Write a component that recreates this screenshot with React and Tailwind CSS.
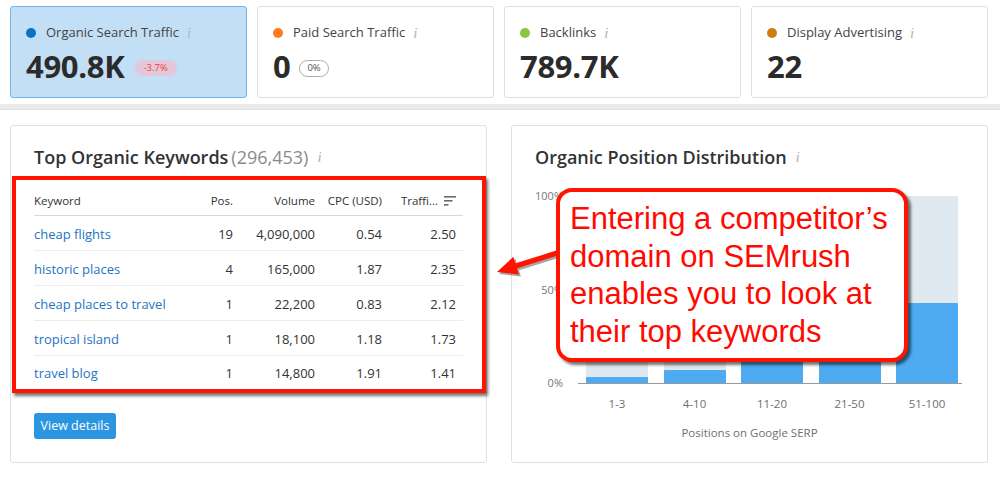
import React from "react";

const cards = [
  { label: "Organic Search Traffic", value: "490.8K", dot: "bg-[#0b72c8]", active: true, badge: "neg" },
  { label: "Paid Search Traffic", value: "0", dot: "bg-[#ff7b1c]", badge: "zero" },
  { label: "Backlinks", value: "789.7K", dot: "bg-[#8cc63f]" },
  { label: "Display Advertising", value: "22", dot: "bg-[#d17a10]" },
];

const keywords = [
  { kw: "cheap flights", pos: "19", vol: "4,090,000", cpc: "0.54", tr: "2.50" },
  { kw: "historic places", pos: "4", vol: "165,000", cpc: "1.87", tr: "2.35" },
  { kw: "cheap places to travel", pos: "1", vol: "22,200", cpc: "0.83", tr: "2.12" },
  { kw: "tropical island", pos: "1", vol: "18,100", cpc: "1.18", tr: "1.73" },
  { kw: "travel blog", pos: "1", vol: "14,800", cpc: "1.91", tr: "1.41" },
];

const bars = [
  { label: "1-3", h: 6 },
  { label: "4-10", h: 13 },
  { label: "11-20", h: 60 },
  { label: "21-50", h: 70 },
  { label: "51-100", h: 80 },
];

const Info = ({ className = "" }) => (
  <span className={`font-['Liberation_Serif',serif] italic text-[15px] text-[#b4b4b4] leading-none ${className}`}>
    i
  </span>
);

const SortIcon = () => (
  <svg width="12" height="10" viewBox="0 0 12 10" className="ml-[6px]">
    <rect x="0" y="0" width="12" height="1.6" fill="#6b6b6b" />
    <rect x="0" y="4" width="8.5" height="1.6" fill="#6b6b6b" />
    <rect x="0" y="8" width="4.5" height="1.6" fill="#6b6b6b" />
  </svg>
);

export default function App() {
  return (
    <div className="relative w-[1000px] h-[478px] overflow-hidden bg-white font-['Open_Sans',sans-serif] text-[#333]">
      {/* Summary cards */}
      <div className="flex gap-[10px] px-[10px] pt-[6px]">
        {cards.map((c) => (
          <div
            key={c.label}
            className={`w-[237px] h-[92px] rounded-[3px] border px-[15px] pt-[19px] ${
              c.active ? "bg-[#c3dff5] border-[#74b4ea]" : "bg-white border-[#dedede]"
            }`}
          >
            <div className="flex items-center h-[14px]">
              <span className={`w-[10px] h-[10px] rounded-full ${c.dot}`} />
              <span className="ml-[10px] text-[13px] text-[#444]">{c.label}</span>
              <Info className="ml-[8px]" />
            </div>
            <div className="flex items-center mt-[8px] h-[36px]">
              <span className="text-[31px] font-bold text-[#2b2b2b] leading-none tracking-[-0.3px]">{c.value}</span>
              {c.badge === "neg" && (
                <span className="ml-[10px] mt-[4px] px-[9px] h-[16px] flex items-center rounded-full bg-[#e4c7d8] text-[9.5px] text-[#ec3f3f]">
                  -3.7%
                </span>
              )}
              {c.badge === "zero" && (
                <span className="ml-[9px] mt-[4px] px-[7px] h-[17px] flex items-center rounded-full border border-[#aaa] bg-white text-[9.5px] text-[#555]">
                  0%
                </span>
              )}
            </div>
          </div>
        ))}
      </div>

      {/* gray separator band */}
      <div className="mt-[6px] h-[6px] bg-[#ebebeb] border-b border-dotted border-[#dcdcdc]" />

      {/* Panels */}
      <div className="flex gap-[24px] px-[10px] mt-[15px]">
        {/* Top Organic Keywords */}
        <div className="w-[477px] h-[338px] rounded-[3px] border border-[#e0e0e0]">
          <div className="flex items-center h-[22px] mt-[20px] pl-[23px]">
            <span className="text-[18px] font-semibold text-[#333]">Top Organic Keywords</span>
            <span className="ml-[3px] text-[18px] text-[#8b8b8b]">(296,453)</span>
            <Info className="ml-[9px]" />
          </div>

          <div className="ml-[1px] mt-[8px] border-[4px] border-[#ff1400] shadow-[2px_3px_3px_rgba(0,0,0,0.55)] pt-[6px] pl-[18px] pr-[19px]">
            <div className="grid grid-cols-[156px_43px_82px_67px_81px] h-[30px] items-center border-b border-[#d8d8d8] text-[11.5px] text-[#333]">
              <span>Keyword</span>
              <span className="text-right">Pos.</span>
              <span className="text-right">Volume</span>
              <span className="text-right">CPC (USD)</span>
              <span className="flex items-center justify-end pr-[7px]">
                Traffi...
                <SortIcon />
              </span>
            </div>
            {keywords.map((k, i) => (
              <div
                key={k.kw}
                className={`grid grid-cols-[156px_43px_82px_67px_81px] items-center text-[13px] pt-[3px] ${
                  i < keywords.length - 1 ? "h-[35px] border-b border-[#ececec]" : "h-[33px]"
                }`}
              >
                <span className="text-[#1f74c1] whitespace-nowrap">{k.kw}</span>
                <span className="text-right">{k.pos}</span>
                <span className="text-right">{k.vol}</span>
                <span className="text-right">{k.cpc}</span>
                <span className="text-right pr-[7px]">{k.tr}</span>
              </div>
            ))}
          </div>

          <button className="ml-[23px] mt-[20px] w-[82px] h-[26px] rounded-[3px] bg-[#2b96df] text-white text-[12.5px]">
            View details
          </button>
        </div>

        {/* Organic Position Distribution */}
        <div className="w-[477px] h-[338px] rounded-[3px] border border-[#e0e0e0]">
          <div className="flex items-center h-[22px] mt-[20px] pl-[23px]">
            <span className="text-[18px] font-semibold text-[#333]">Organic Position Distribution</span>
            <Info className="ml-[9px]" />
          </div>

          <div className="flex mt-[22px] pl-[23px]">
            <div className="w-[28px] h-[199px] flex flex-col justify-between items-end text-[11px] text-[#777]">
              <span className="leading-[12px]">100%</span>
              <span className="leading-[12px]">50%</span>
              <span className="leading-[12px]">0%</span>
            </div>
            <div className="ml-[15px] mt-[6px] w-[384px] h-[188px] border-b border-[#9a9a9a] flex items-end gap-[15.5px] pl-[8px] pr-[4px]">
              {bars.map((b) => (
                <div key={b.label} className="w-[62px] h-full bg-[#e1e9f0] flex flex-col justify-end">
                  <div className="bg-[#4eabf1] rounded-t-[1px]" style={{ height: b.h }} />
                </div>
              ))}
            </div>
          </div>

          <div className="flex gap-[15.5px] ml-[74px] mt-[9px] text-[11.5px] text-[#6f6f6f]">
            {bars.map((b) => (
              <span key={b.label} className="w-[62px] text-center leading-[12px]">
                {b.label}
              </span>
            ))}
          </div>

          <div className="mt-[17px] text-center text-[11.5px] text-[#6f6f6f] leading-[12px]">
            Positions on Google SERP
          </div>
        </div>
      </div>

      {/* callout arrow */}
      <svg className="absolute left-[490px] top-[240px]" width="75" height="45" viewBox="0 0 75 45">
        <g transform="translate(2 2)" fill="#000" stroke="#000" opacity="0.35">
          <line x1="67" y1="13" x2="24" y2="26.5" strokeWidth="5" />
          <polygon points="7,32 23.3,16.8 28.9,34.4" strokeWidth="0" />
        </g>
        <line x1="67" y1="13" x2="24" y2="26.5" stroke="#ff1400" strokeWidth="5" />
        <polygon points="7,32 23.3,16.8 28.9,34.4" fill="#ff1400" />
      </svg>

      {/* callout */}
      <div className="absolute left-[556px] top-[188px] w-[352px] h-[174px] rounded-[16px] border-[4px] border-[#ff1400] bg-white shadow-[3px_3px_3px_rgba(0,0,0,0.55)] pl-[10px] pt-[8px]">
        <p className="font-['Liberation_Sans',Arial,sans-serif] text-[31px] leading-[37.5px] text-[#ff0a00] whitespace-nowrap">
          Entering a competitor’s
          <br />
          domain on SEMrush
          <br />
          enables you to look at
          <br />
          their top keywords
        </p>
      </div>
    </div>
  );
}
